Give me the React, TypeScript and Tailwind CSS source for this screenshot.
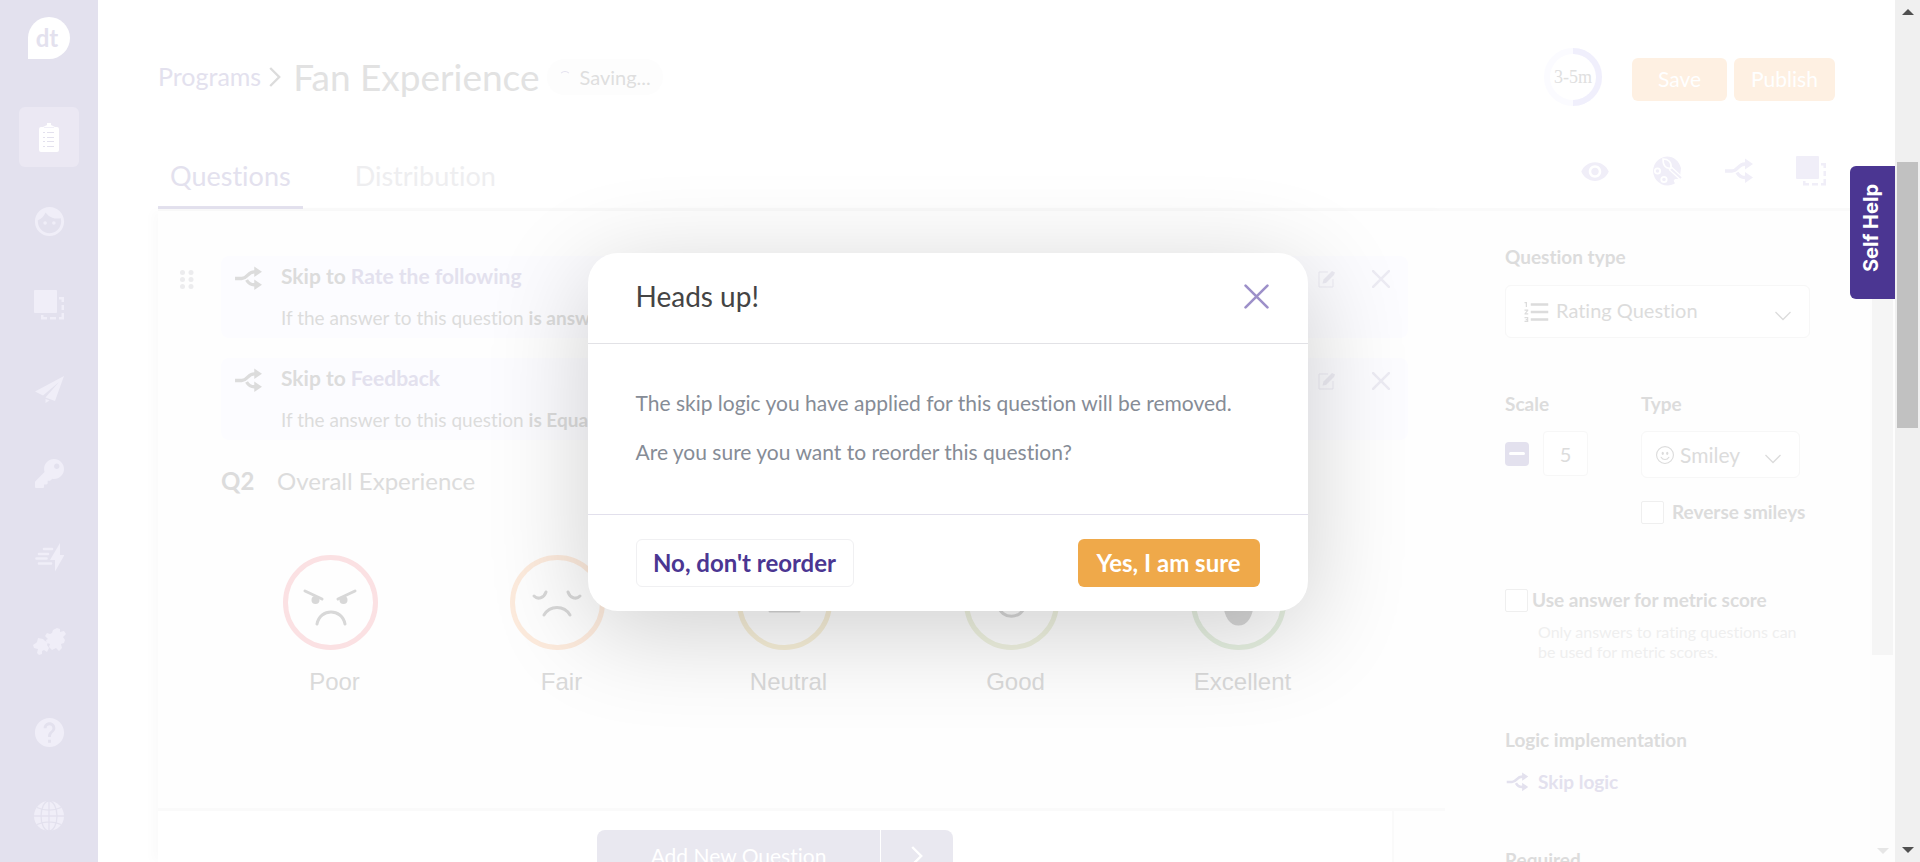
import type { ReactNode } from "react";
import { FaKey } from "react-icons/fa";
import { MdFace, MdFormatListNumbered, MdHelp, MdVisibility } from "react-icons/md";
import { BsEmojiSmile } from "react-icons/bs";

function SplitIcon({ className }: { className?: string }) {
  return (
    <svg viewBox="0 0 28 26" className={className} fill="none" stroke="currentColor" strokeWidth="3.4">
      <path d="M0 13h7c6 0 6-7 13-7h2" />
      <path d="M12 14.500c2 3.500 4.500 5 8 5h2" />
      <path d="M20 .5l8 5.500-8 5.500zM20 14l8 5.500-8 5.500z" fill="currentColor" stroke="none" />
    </svg>
  );
}

function FramesIcon({ className }: { className?: string }) {
  return (
    <svg viewBox="0 0 30 30" className={className} fill="currentColor">
      <rect width="23" height="23" rx="1" />
      <path d="M25 7h5v5h-2.500V9.500H25zM27.500 15H30v5h-2.500zM27.500 23H30v6.500h-5V27h2.500zM16 27h6v2.500h-6zM7 25h2.500v2H13v2.500H7z" />
    </svg>
  );
}

function ClipboardIcon() {
  return (
    <svg viewBox="0 0 20 29" className="h-[29px] w-5">
      <path d="M8 0h4v2l4 2H18a2 2 0 0 1 2 2v21a2 2 0 0 1-2 2H2a2 2 0 0 1-2-2V6a2 2 0 0 1 2-2h2l4-2z" fill="#fff" />
      <path d="M4 9.500h2M8 9.500h7M4 14.500h2M8 14.500h7M4 18.500h2M8 18.500h7M4 23.500h2M8 23.500h7" stroke="#e3e1ee" />
      <path d="M5 4.500h10" stroke="#f1eff8" />
    </svg>
  );
}

function PlaneIcon() {
  return (
    <svg viewBox="0 0 29 27" className="h-[27px] w-[29px]" fill="currentColor">
      <path d="M29 0L0 15.500l8 4L24 6 10.500 21.500 20 25zM10.500 23v4l4-2.500z" />
    </svg>
  );
}

function BoltIcon() {
  return (
    <svg viewBox="0 0 29 29" className="size-[29px]" fill="currentColor">
      <path d="M25 0v12h4.500L20 28.500V17h-5z" />
      <path d="M9 6h8M4 11h9M1.500 15.500h10M4 20.500h12" stroke="currentColor" strokeWidth="2.600" strokeLinecap="round" />
    </svg>
  );
}

function PuzzleIcon() {
  return (
    <svg viewBox="0 0 33 27" className="h-[27px] w-[33px]" fill="currentColor">
      <path d="M20 2l4-2 3 1v3l4-1 2 3-3 3 2 3-1 3-3 1 1 4-3 3-3-3-4 2-3-3 1-3-3-1-1-3 2-1-3-3 2-3 3 1 2-1z" />
      <path d="M5 10l5 1 2 2 3 1-1 3 2 3-2 4-3-2-2 1v3l-3 1-2-2 1-4-4-1-1-3 3-2 1-1z" />
    </svg>
  );
}

function GlobeIcon() {
  return (
    <svg viewBox="0 0 30 30" className="size-[30px]">
      <circle cx="15" cy="15" r="15" fill="currentColor" />
      <g fill="none" stroke="#e3e1ee" strokeWidth="1.300">
        <path d="M15 0v30M0 15h30M3 6.500c7 3.500 17 3.500 24 0M3 23.500c7-3.500 17-3.500 24 0" />
        <ellipse cx="15" cy="15" rx="8" ry="15" />
      </g>
    </svg>
  );
}

function PaletteIcon() {
  return (
    <svg viewBox="0 0 30 30" className="size-[30px]">
      <path d="M15 .5A14.500 14.500 0 1 0 22 28c2-1-1-2 0-4s5 0 6-3L29 12C27 5 22 .5 15 .5z" fill="currentColor" />
      <circle cx="5.500" cy="15" r="2.700" fill="none" stroke="#fff" strokeWidth="1.800" />
      <circle cx="12" cy="23.500" r="2.700" fill="none" stroke="#fff" strokeWidth="1.800" />
      <path d="M18 12L30 23" stroke="#fff" strokeWidth="4.500" />
      <path d="M19 13l10 9" stroke="currentColor" strokeWidth="2" />
      <path d="M11 3c5 0 9 3 8 9-5 1-8-2-8-9z" fill="currentColor" stroke="#fff" strokeWidth="1.600" />
    </svg>
  );
}

function EditIcon() {
  return (
    <svg viewBox="0 0 18 18" className="size-[18px]" fill="none" stroke="currentColor">
      <path d="M10 2H1v15h14V9" />
      <path d="M4.500 13.500l1-4L14 1l3 1.500-1 2.500-8 8z" fill="currentColor" stroke="none" />
    </svg>
  );
}

function CrossIcon({ className, strokeWidth = 3 }: { className?: string; strokeWidth?: number }) {
  return (
    <svg viewBox="0 0 24 24" className={className} stroke="currentColor" strokeWidth={strokeWidth} strokeLinecap="round">
      <path d="M1.500 1.500l21 21M22.500 1.500l-21 21" />
    </svg>
  );
}

function ChevronIcon({ className }: { className?: string }) {
  return (
    <svg viewBox="0 0 16 10" className={className} fill="none" stroke="currentColor" strokeWidth="1.300">
      <path d="M.5 1L8 8.500 15.500 1" />
    </svg>
  );
}

const navItems = [
  { label: "Programs", icon: <ClipboardIcon />, active: true },
  { label: "Audience", icon: <MdFace className="size-[35px]" /> },
  { label: "Templates", icon: <FramesIcon className="size-[30px]" /> },
  { label: "Send", icon: <PlaneIcon /> },
  { label: "Access", icon: <FaKey className="size-[29px]" /> },
  { label: "Automations", icon: <BoltIcon /> },
  { label: "Integrations", icon: <PuzzleIcon /> },
];

const footerItems = [
  { label: "Help", icon: <MdHelp className="size-[35px]" /> },
  { label: "Language", icon: <GlobeIcon /> },
];

const tools = [
  { label: "Preview", icon: <MdVisibility className="size-[31px]" /> },
  { label: "Theme", icon: <PaletteIcon /> },
  { label: "Logic", icon: <SplitIcon className="h-[26px] w-[30px]" /> },
  { label: "Layout", icon: <FramesIcon className="size-[30px]" /> },
];

const skipRules = [
  { target: "Rate the following", condition: "is answered" },
  { target: "Feedback", condition: "is Equal to" },
];

const ratings = [
  {
    label: "Poor",
    ring: "#fbe1e3",
    face: (
      <>
        <path d="M22 36l17 8M72 36l-17 8M34 69c3-16 25-16 28 0" />
        <circle cx="32.500" cy="45" r="4" fill="currentColor" stroke="none" />
        <circle cx="60.500" cy="45" r="4" fill="currentColor" stroke="none" />
      </>
    ),
  },
  {
    label: "Fair",
    ring: "#fdebdd",
    face: <path d="M24 41c4 4 10 2 12-4M58 37c2 6 8 8 12 4M34 60c6-10 20-10 26 0" />,
  },
  { label: "Neutral", ring: "#f7efd8", face: <path d="M33 56h29" /> },
  { label: "Good", ring: "#eff2e0", face: <path d="M34 50c3 15 24 15 27 0" /> },
  {
    label: "Excellent",
    ring: "#e6f0e1",
    face: <path d="M34 48h27c0 28-27 28-27 0z" fill="currentColor" />,
  },
];

function NavItem({ label, icon, active }: { label: string; icon: ReactNode; active?: boolean }) {
  return (
    <a
      href="#"
      aria-label={label}
      className={`flex size-[60px] items-center justify-center rounded-md ${active ? "bg-[#ebe8f3]" : "text-[#f0eef8]"}`}
    >
      {icon}
    </a>
  );
}

function Sidebar() {
  return (
    <nav className="flex w-[98px] shrink-0 flex-col items-center bg-[#e3e1ee] pt-[17px] pb-4">
      <a
        href="#"
        className="flex size-[42px] items-center justify-center rounded-full rounded-bl-none bg-white pr-1 text-2xl leading-6 font-bold text-[#e3e1ee]"
      >
        dt
      </a>
      <div className="mt-12 flex flex-col gap-6">
        {navItems.map((item) => (
          <NavItem key={item.label} {...item} />
        ))}
      </div>
      <div className="mt-auto flex flex-col gap-6">
        {footerItems.map((item) => (
          <NavItem key={item.label} {...item} />
        ))}
      </div>
    </nav>
  );
}

function Header() {
  return (
    <header className="flex h-[110px] shrink-0 items-center px-[60px] pt-12">
      <div className="flex items-center pb-1">
        <a href="#" className="text-[25px] text-[#e3e1ee]">
          Programs
        </a>
        <ChevronIcon className="mx-1 h-3 w-5 -rotate-90 stroke-2 text-[#dcdcdc]" />
        <h1 className="ml-1 text-[37px] leading-10 text-[#e2e2e2]">Fan Experience</h1>
        <span className="ml-2 flex items-center gap-2 rounded-full bg-[#fdfdfd] px-3 py-1 text-xl text-[#dfdfdf]">
          <span className="size-3 rounded-full border border-transparent border-t-[#e3e1ee]" />
          Saving...
        </span>
      </div>
      <div className="ml-auto flex items-center">
        <div className="relative mr-[30px] flex size-[58px] items-center justify-center pb-1 font-['Liberation_Serif',serif] text-lg text-[#e0e0e0]">
          <svg viewBox="0 0 58 58" className="absolute inset-x-0 -top-[2px]" fill="none" strokeWidth="6">
            <circle cx="29" cy="29" r="26" stroke="#fbfbff" />
            <path d="M29 3a26 26 0 0 1 0 52" stroke="#f0effc" />
          </svg>
          3-5m
        </div>
        <button className="h-[43px] w-[95px] rounded-md bg-[#fef0e2] text-[21px] text-white">Save</button>
        <button className="ml-[7px] h-[43px] w-[101px] rounded-md bg-[#fef0e2] text-[21px] text-white">Publish</button>
      </div>
    </header>
  );
}

function Tabs() {
  return (
    <div className="ml-[60px] flex h-[101px] shrink-0 items-end border-b-[3px] border-[#fafafa] pr-[69px]">
      <a href="#" className="-mb-px border-b-[3px] border-[#e3e1ee] px-3 pb-[14px] text-[27px] leading-8 text-[#e3e1ee]">
        Questions
      </a>
      <a href="#" className="ml-10 px-3 pb-4 text-[27px] leading-8 text-[#eeeef0]">
        Distribution
      </a>
      <div className="mb-[22px] ml-auto flex items-center gap-[42px] text-[#f0eef8]">
        {tools.map((tool) => (
          <button key={tool.label} aria-label={tool.label} className="flex size-[30px] items-center justify-center">
            {tool.icon}
          </button>
        ))}
      </div>
    </div>
  );
}

function SkipRule({ target, condition }: { target: string; condition: string }) {
  return (
    <div className="flex h-[82px] items-start rounded-lg bg-[#fcfcff] pt-[6px] pr-[18px] pl-[14px]">
      <SplitIcon className="mt-1 h-[25px] w-[27px] text-[#dcdcdc]" />
      <div className="ml-[19px] text-[#dcdcdc]">
        <p className="text-[21px] leading-7 font-bold">
          Skip to <span className="text-[#e3e1ee]">{target}</span>
        </p>
        <p className="mt-[14px] text-[19px] leading-7">
          If the answer to this question <b>{condition}</b>
        </p>
      </div>
      <div className="mt-2 ml-auto flex items-center gap-9 text-[#ecebf3]">
        <button aria-label="Edit rule">
          <EditIcon />
        </button>
        <button aria-label="Remove rule">
          <CrossIcon className="size-[18px]" strokeWidth={3.5} />
        </button>
      </div>
    </div>
  );
}

function QuestionPanel() {
  return (
    <section className="flex flex-1 flex-col bg-white shadow-[-6px_0_10px_rgba(0,0,0,0.02)]">
      <div className="flex border-b-[3px] border-[#fafafa] bg-[#fefefe] pt-[45px] pr-[37px] pb-[110px] pl-[22px]">
        <svg viewBox="0 0 14 19" className="mt-[14px] mr-[27px] h-[19px] w-[14px] shrink-0 fill-[#ececee]">
          {[2.5, 9.5, 16.5].map((y) => (
            <g key={y}>
              <circle cx="2.500" cy={y} r="2.500" />
              <circle cx="11" cy={y} r="2.500" />
            </g>
          ))}
        </svg>
        <div className="flex-1">
          <div className="flex flex-col gap-5">
            {skipRules.map((rule) => (
              <SkipRule key={rule.target} {...rule} />
            ))}
          </div>
          <h2 className="mt-[25px] flex items-center text-2xl text-[#dcdcdc]">
            <b className="w-14">Q2</b>
            Overall Experience
          </h2>
          <div className="mt-[58px] mr-[52px] grid grid-cols-5">
            {ratings.map((rating) => (
              <button key={rating.label} className="flex flex-col items-center">
                <svg
                  viewBox="0 0 95 95"
                  className="mr-2 size-[95px] text-[#d8d8d8]"
                  fill="none"
                  stroke="currentColor"
                  strokeWidth="3"
                  strokeLinecap="round"
                >
                  <circle cx="47.500" cy="47.500" r="45" stroke={rating.ring} strokeWidth="5" />
                  {rating.face}
                </svg>
                <span className="mt-4 font-['Liberation_Sans',sans-serif] text-2xl text-[#dadada]">{rating.label}</span>
              </button>
            ))}
          </div>
        </div>
      </div>
      <div className="flex flex-1">
        <div className="flex flex-1 items-start justify-center border-r-2 border-[#fafafa] pt-[19px] text-[21px] text-white">
          <button className="h-[52px] w-[283px] rounded-l-lg bg-[#e9e8f0]">Add New Question</button>
          <button aria-label="More question types" className="ml-px flex h-[52px] w-[72px] items-center justify-center rounded-r-lg bg-[#e9e8f0]">
            <ChevronIcon className="h-3 w-5 -rotate-90 stroke-2" />
          </button>
        </div>
        <div className="w-[51px] bg-[#fefefe]" />
      </div>
    </section>
  );
}

function SettingsPanel() {
  return (
    <aside className="flex w-[450px] shrink-0 justify-between bg-[#fefefe] pl-[60px] text-[19px] leading-7 text-[#dcdcdc]">
      <div className="w-[305px] pt-8">
        <label htmlFor="question-type" className="block font-bold">
          Question type
        </label>
        <div className="mt-[14px] flex h-[53px] items-center rounded-md border border-[#f7f7f7] bg-white pr-[18px] pl-4">
          <MdFormatListNumbered className="size-[30px]" />
          <select id="question-type" className="ml-1 flex-1 appearance-none pb-1 text-xl">
            <option>Rating Question</option>
          </select>
          <ChevronIcon className="mt-2 h-[10px] w-4" />
        </div>

        <div className="mt-[52px] flex">
          <div className="w-[136px]">
            <label htmlFor="scale" className="block font-bold">
              Scale
            </label>
            <div className="mt-[13px] flex items-center gap-[14px]">
              <button aria-label="Decrease scale" className="flex size-6 items-center justify-center rounded-sm bg-[#e3e1ee]">
                <span className="h-[3px] w-4 rounded-full bg-white" />
              </button>
              <input
                id="scale"
                defaultValue="5"
                className="h-[45px] w-[45px] rounded-sm border border-[#f7f7f7] bg-white text-center text-xl"
              />
            </div>
          </div>
          <div className="flex-1">
            <label htmlFor="scale-type" className="block font-bold">
              Type
            </label>
            <div className="mt-[13px] flex h-[47px] w-[159px] items-center rounded-md border border-[#f7f7f7] bg-white pr-[18px] pl-[14px]">
              <BsEmojiSmile className="size-[18px] shrink-0" />
              <select id="scale-type" className="ml-[6px] w-0 flex-1 appearance-none text-[21px]">
                <option>Smiley</option>
              </select>
              <ChevronIcon className="mt-2 h-[10px] w-4" />
            </div>
            <label className="mt-5 flex items-center gap-2 font-bold whitespace-nowrap">
              <input type="checkbox" className="size-[23px] appearance-none rounded-xs border border-[#efefef] bg-white" />
              Reverse smileys
            </label>
          </div>
        </div>

        <label className="mt-[60px] flex items-center gap-1 font-bold">
          <input type="checkbox" className="size-[23px] appearance-none rounded-xs border border-[#efefef] bg-white" />
          Use answer for metric score
        </label>
        <p className="mt-2 pl-[33px] text-base leading-5 whitespace-nowrap text-[#efefef]">
          Only answers to rating questions can
          <br />
          be used for metric scores.
        </p>

        <h3 className="mt-16 font-bold">Logic implementation</h3>
        <button className="mt-[14px] flex items-center gap-2 font-bold text-[#e3e1ee]">
          <SplitIcon className="h-5 w-[25px]" />
          Skip logic
        </button>
        <h3 className="mt-[50px] font-bold">Required</h3>
      </div>
      <div className="flex w-[25px] flex-col items-center bg-[#fdfdfd] pb-1">
        <div className="mt-12 h-[396px] w-[21px] bg-[#f5f5f5]" />
        <svg viewBox="0 0 12 6" className="mt-auto mb-1 h-[6px] w-3 fill-[#e6e6e6]">
          <path d="M0 0h12L6 6z" />
        </svg>
      </div>
    </aside>
  );
}

function ReorderDialog() {
  return (
    <div className="absolute inset-0 flex items-center justify-center pt-[2px]">
      <div
        role="dialog"
        aria-labelledby="dialog-title"
        className="w-[720px] rounded-[30px] bg-white shadow-[0_20px_100px_rgba(0,0,0,0.19)]"
      >
        <div className="flex h-[91px] items-center justify-between border-b border-[#e2e2e6] pr-[39px] pb-1 pl-12">
          <h2 id="dialog-title" className="text-[28px] text-[#444]">
            Heads up!
          </h2>
          <button aria-label="Close" className="text-[#9d90c9]">
            <CrossIcon className="size-[25px]" strokeWidth={2.5} />
          </button>
        </div>
        <div className="flex h-[171px] flex-col justify-center border-b border-[#e2e0ec] px-12 pb-1 text-[21px] leading-7 text-[#868c96]">
          <p>The skip logic you have applied for this question will be removed.</p>
          <p className="mt-[21px]">Are you sure you want to reorder this question?</p>
        </div>
        <div className="flex items-center justify-between px-12 py-6 text-2xl font-bold">
          <button className="h-12 w-[218px] rounded-md border border-[#f0f0f2] text-[#4b3692]">No, don't reorder</button>
          <button className="h-12 w-[182px] rounded-md bg-[#efa94a] text-white">Yes, I am sure</button>
        </div>
      </div>
    </div>
  );
}

function Scrollbar() {
  return (
    <div className="flex w-[25px] shrink-0 flex-col items-center justify-between bg-[#f0f0f0] py-[9px]">
      <svg viewBox="0 0 12 6" className="h-[6px] w-3 fill-[#505050]">
        <path d="M0 6h12L6 0z" />
      </svg>
      <div className="mt-[147px] mb-auto h-[266px] w-[21px] bg-[#c1c1c1]" />
      <svg viewBox="0 0 12 6" className="h-[6px] w-3 fill-[#505050]">
        <path d="M0 0h12L6 6z" />
      </svg>
    </div>
  );
}

export default function App() {
  return (
    <div className="flex h-screen overflow-hidden bg-white font-['Lato',sans-serif] [font-variant-ligatures:none]">
      <div className="relative flex flex-1 overflow-hidden">
        <Sidebar />
        <main className="flex flex-1 flex-col">
          <Header />
          <Tabs />
          <div className="flex min-h-0 flex-1 pl-[60px]">
            <QuestionPanel />
            <SettingsPanel />
          </div>
        </main>
        <ReorderDialog />
        <button className="absolute top-[166px] right-0 flex h-[133px] w-[45px] items-center justify-center rounded-l-md bg-[#4b3692] pr-1 pb-2 font-['Inter',sans-serif] text-xl font-bold text-white">
          <span className="rotate-180 [writing-mode:vertical-rl]">Self Help</span>
        </button>
      </div>
      <Scrollbar />
    </div>
  );
}
